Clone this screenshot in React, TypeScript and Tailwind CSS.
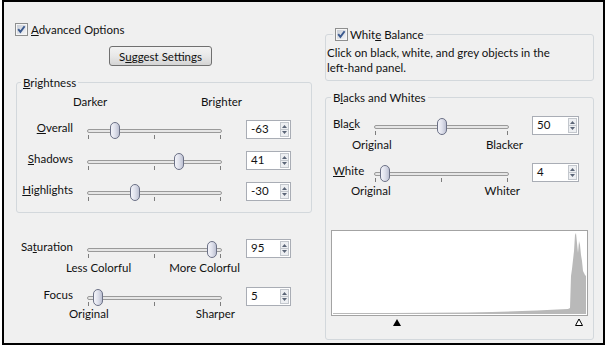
import React from 'react'

// access-key label: underline one letter
function Key({ text, at }: { text: string; at: number }) {
  if (at < 0) return <>{text}</>
  return (
    <>
      {text.slice(0, at)}
      <u className="decoration-1 underline-offset-[1px]">{text[at]}</u>
      {text.slice(at + 1)}
    </>
  )
}

function Check() {
  return (
    <svg width="13" height="13" viewBox="0 0 13 13" className="shrink-0">
      <rect x="0.5" y="0.5" width="12" height="12" fill="#f6f6f6" stroke="#8e8f8f" />
      <rect x="2" y="2" width="9" height="9" fill="url(#cbg)" />
      <path d="M3.2 6.2 L5.4 8.9 L9.6 3.3" fill="none" stroke="#3b5a8f" strokeWidth="1.9" />
    </svg>
  )
}

function Slider({ thumb }: { thumb: number }) {
  return (
    <svg width="135" height="21" className="shrink-0">
      <rect x="0.5" y="10.5" width="134" height="3" rx="1.5" fill="#e6e6e6" stroke="#9a9a9a" />
      {[1.5, 67.5, 133.5].map((x) => (
        <line key={x} x1={x} y1="16" x2={x} y2="20" stroke="#7d7d7d" />
      ))}
      <rect x={thumb - 4.5} y="3.5" width="9" height="16" rx="4.5" fill="url(#thg)" stroke="#6c7186" />
    </svg>
  )
}

function Spin({ value, className }: { value: string; className: string }) {
  return (
    <div className={`flex h-[19px] shrink-0 items-center border border-[#a9adb5] bg-white ${className}`}>
      <span className="flex-1 pl-[4px] leading-none">{value}</span>
      <div className="mr-[1px] flex h-[15px] w-[9px] flex-col border border-[#c3c7cd] bg-[#edeff2]">
        <svg width="7" height="13" viewBox="0 0 7 13">
          <path d="M1 5 L3.5 2 L6 5 Z" fill="#5b6577" />
          <line x1="0" y1="6.5" x2="7" y2="6.5" stroke="#c3c7cd" />
          <path d="M1 8 L3.5 11 L6 8 Z" fill="#5b6577" />
        </svg>
      </div>
    </div>
  )
}

function LeftRow({ label, thumb, value }: { label: React.ReactNode; thumb: number; value: string }) {
  return (
    <div className="flex h-[20px] items-center">
      <div className="w-[56px] pb-[3px] text-right">{label}</div>
      <div className="ml-[14px]">
        <Slider thumb={thumb} />
      </div>
      <Spin value={value} className="ml-[24px] w-[45px]" />
    </div>
  )
}

function RightRow({ label, thumb, value }: { label: React.ReactNode; thumb: number; value: string }) {
  return (
    <div className="flex h-[20px] items-center">
      <div className="w-[48px] pb-[3px] pl-[7px]">{label}</div>
      <Slider thumb={thumb} />
      <Spin value={value} className="ml-[23px] w-[47px]" />
    </div>
  )
}

const HIST =
  '1,83 1,82 60,82 135,81.5 160,81 190,80 205,79.5 215,79 225,78.5 236,78 238,77 239,45 240,38 242,20 243,4 244,2 245,12 246,22 247,10 248,14 249,24 250,30 251,40 252,42 253,44 254,45 254,83'

export default function App() {
  return (
    <div className="h-[350px] w-[609px] bg-white pl-[2px] font-[Lato,sans-serif] text-[11.5px] leading-[15px] text-[#111]">
      <svg width="0" height="0" className="absolute">
        <defs>
          <linearGradient id="cbg" x1="0" y1="0" x2="1" y2="1">
            <stop offset="0" stopColor="#c9ced7" />
            <stop offset="1" stopColor="#f4f5f7" />
          </linearGradient>
          <linearGradient id="thg" x1="0" y1="0" x2="1" y2="0">
            <stop offset="0" stopColor="#f6f6fb" />
            <stop offset="0.5" stopColor="#dfe1ec" />
            <stop offset="1" stopColor="#b9bdcf" />
          </linearGradient>
        </defs>
      </svg>

      <div className="flex h-[345px] w-[603px] border-2 border-black bg-[#f0f0f0]">
        {/* left column */}
        <div className="w-[308px] shrink-0">
          <div className="ml-[11px] mt-[20px] flex h-[15px] items-center gap-[3px]">
            <Check />
            <span>
              <Key text="Advanced Options" at={0} />
            </span>
          </div>

          <button className="ml-[105px] mt-[9px] flex h-[20px] w-[103px] items-center justify-center rounded-[3px] border border-[#707070] bg-linear-to-b from-[#f3f3f3] via-[#e8e8e8] to-[#d4d4d4]">
            <Key text="Suggest Settings" at={1} />
          </button>

          <fieldset className="ml-[12px] mt-[9px] w-[296px] rounded-[3px] border border-[#d3d8dc] p-0 pb-[11px]">
            <legend className="ml-[4px] px-[2px]">
              <Key text="Brightness" at={0} />
            </legend>
            <div className="ml-[56px] mt-[4px] flex w-[169px] justify-between">
              <span>Darker</span>
              <span>Brighter</span>
            </div>
            <div className="mt-[10px]">
              <LeftRow label={<Key text="Overall" at={0} />} thumb={28} value="-63" />
            </div>
            <div className="mt-[11px]">
              <LeftRow label={<Key text="Shadows" at={0} />} thumb={92} value="41" />
            </div>
            <div className="mt-[11px]">
              <LeftRow label={<Key text="Highlights" at={0} />} thumb={48} value="-30" />
            </div>
          </fieldset>

          <div className="ml-[13px] mt-[25px]">
            <LeftRow label={<Key text="Saturation" at={2} />} thumb={125} value="95" />
          </div>
          <div className="ml-[62px] mt-[2px] flex w-[174px] justify-between">
            <span>Less Colorful</span>
            <span>More Colorful</span>
          </div>
          <div className="ml-[13px] mt-[11px]">
            <LeftRow label="Focus" thumb={11} value="5" />
          </div>
          <div className="ml-[65px] flex w-[166px] justify-between">
            <span>Original</span>
            <span>Sharper</span>
          </div>
        </div>

        {/* right column */}
        <div className="ml-[13px] w-[269px] shrink-0">
          <fieldset className="mt-[25px] rounded-[3px] border border-[#d3d8dc] p-0 pb-[5px]">
            <legend className="ml-[7px] px-[2px]">
              <span className="flex h-[15px] items-center gap-[2px]">
                <Check />
                <span>
                  <Key text="White Balance" at={4} />
                </span>
              </span>
            </legend>
            <p className="ml-[1px] mt-[3px] whitespace-nowrap">
              Click on black, white, and grey objects in the
              <br />
              left-hand panel.
            </p>
          </fieldset>

          <fieldset className="mt-[9px] rounded-[3px] border border-[#d3d8dc] p-0 pb-[13px]">
            <legend className="ml-[5px] px-[2px]">
              <Key text="Blacks and Whites" at={1} />
            </legend>
            <div className="mt-[10px]">
              <RightRow label={<Key text="Black" at={3} />} thumb={68} value="50" />
            </div>
            <div className="ml-[26px] mt-[2px] flex w-[171px] justify-between">
              <span>Original</span>
              <span>Blacker</span>
            </div>
            <div className="mt-[10px]">
              <RightRow label={<Key text="White" at={0} />} thumb={11} value="4" />
            </div>
            <div className="ml-[25px] mt-[1px] flex w-[169px] justify-between">
              <span>Original</span>
              <span>Whiter</span>
            </div>

            <div className="ml-[5px] mt-[32px] h-[86px] w-[257px] border border-[#a3a3a3] bg-white">
              <svg width="255" height="84" viewBox="0 0 255 84">
                <polygon points={HIST} fill="#b9b9b9" />
              </svg>
            </div>
            <svg width="267" height="8" className="mt-[2px] block">
              <path d="M67 8 L71 1 L75 8 Z" fill="#000" />
              <path d="M249.5 7.5 L253 1 L256.5 7.5 Z" fill="#fff" stroke="#000" />
            </svg>
          </fieldset>
        </div>
      </div>
    </div>
  )
}
